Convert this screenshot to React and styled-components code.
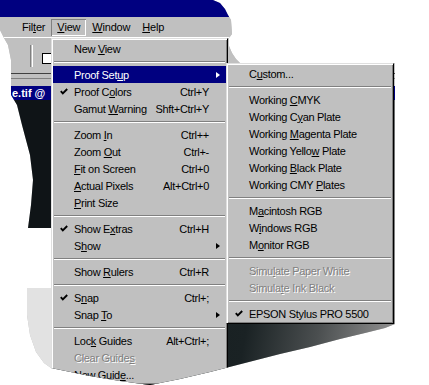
import styled, { createGlobalStyle } from "styled-components";

const GlobalStyle = createGlobalStyle`
  html, body { margin: 0; padding: 0; background: #fff; }
  body { font-family: "Liberation Sans", Arial, sans-serif; font-size: 11px; }
`;

// torn-paper outline of the screenshot
const TEAR = `polygon(
  0px 0px, 213px 0px, 220px 3px, 225px 9px, 228px 15px, 231px 20px, 232px 34px,
  229px 38px, 229px 46px, 232px 53px, 236px 59px, 240px 63px, 395px 63px,
  395px 324px, 385px 328px, 365px 333px, 340px 339px, 310px 347px, 280px 354px,
  245px 363px, 210px 372px, 180px 379px, 150px 385px, 120px 381px, 90px 376px,
  51px 368px, 44px 363px, 36px 352px, 30px 335px, 27px 315px, 27px 288px,
  51px 288px, 51px 228px, 28px 228px, 31px 205px, 33px 180px, 30px 155px,
  22px 125px, 17px 105px, 11px 95px, 11px 60px, 8px 45px, 4px 38px, 0px 30px
)`;

const VIEW_MENU = [
  { label: "New &View" },
  { sep: true },
  { label: "Proof Set&up", sub: true, active: true },
  { label: "Proof C&olors", keys: "Ctrl+Y", checked: true },
  { label: "Gamut &Warning", keys: "Shft+Ctrl+Y" },
  { sep: true },
  { label: "Zoom &In", keys: "Ctrl++" },
  { label: "Zoom &Out", keys: "Ctrl+-" },
  { label: "&Fit on Screen", keys: "Ctrl+0" },
  { label: "&Actual Pixels", keys: "Alt+Ctrl+0" },
  { label: "&Print Size" },
  { sep: true },
  { label: "Show E&xtras", keys: "Ctrl+H", checked: true },
  { label: "S&how", sub: true },
  { sep: true },
  { label: "Show &Rulers", keys: "Ctrl+R" },
  { sep: true },
  { label: "S&nap", keys: "Ctrl+;", checked: true },
  { label: "Snap &To", sub: true },
  { sep: true },
  { label: "Loc&k Guides", keys: "Alt+Ctrl+;" },
  { label: "Clear Guide&s", disabled: true },
  { label: "New Guid&e..." },
];

const PROOF_MENU = [
  { label: "C&ustom..." },
  { sep: true },
  { label: "Working &CMYK" },
  { label: "Working C&yan Plate" },
  { label: "Working &Magenta Plate" },
  { label: "Working Yello&w Plate" },
  { label: "Working &Black Plate" },
  { label: "Working CMY &Plates" },
  { sep: true },
  { label: "M&acintosh RGB" },
  { label: "W&indows RGB" },
  { label: "M&onitor RGB" },
  { sep: true },
  { label: "Simu&late Paper White", disabled: true },
  { label: "Simula&te Ink Black", disabled: true },
  { sep: true },
  { label: "EPSON Stylus PRO 5500", checked: true },
];

const Label = ({ text }) => {
  const i = text.indexOf("&");
  if (i < 0) return text;
  return (
    <>
      {text.slice(0, i)}
      <u>{text[i + 1]}</u>
      {text.slice(i + 2)}
    </>
  );
};

const Check = () => (
  <svg width="8" height="7" viewBox="0 0 8 7">
    <polyline points="0.8,3.2 2.8,5.4 7.2,1" fill="none" stroke="currentColor" strokeWidth="1.9" />
  </svg>
);

const Menu = ({ items, ...rest }) => (
  <MenuBox {...rest}>
    {items.map((it, i) =>
      it.sep ? (
        <Separator key={i} />
      ) : (
        <Item key={i} $active={it.active} $disabled={it.disabled}>
          <CheckCell>{it.checked && <Check />}</CheckCell>
          <Text><Label text={it.label} /></Text>
          {it.keys && <Keys>{it.keys}</Keys>}
          <ArrowCell>{it.sub && <Arrow />}</ArrowCell>
        </Item>
      )
    )}
  </MenuBox>
);

const App = () => (
  <>
    <GlobalStyle />
    <Screen>
      <Desktop>
        <TitleStrip />
        <MenuBar>
          <BarItem><Label text="Fil&ter" /></BarItem>
          <BarItem $open><Label text="&View" /></BarItem>
          <BarItem><Label text="&Window" /></BarItem>
          <BarItem><Label text="&Help" /></BarItem>
        </MenuBar>
        <Toolbar>
          <ToolSep />
          <CheckBox />
        </Toolbar>
        <DocEdge />
        <DocTitle>e.tif @</DocTitle>
        <DocBody>
          <LeftStrip>
            <DarkPiece />
            <Gap />
            <Canvas />
          </LeftStrip>
          <ImageArea />
        </DocBody>
        <Menu items={VIEW_MENU} $left={51} $top={38} $width={177} />
        <Menu items={PROOF_MENU} $left={226} $top={63} $width={168} />
      </Desktop>
    </Screen>
  </>
);

export default App;

const Screen = styled.div`
  position: relative;
  width: 429px;
  height: 385px;
  overflow: hidden;
  background: #fff;
`;

const Desktop = styled.div`
  position: relative;
  width: 429px;
  height: 385px;
  display: flex;
  flex-direction: column;
  clip-path: ${TEAR};
  background: #c0c0c0;
`;

const TitleStrip = styled.div`
  height: 17px;
  flex: none;
  background: #000080;
`;

const MenuBar = styled.div`
  height: 20px;
  flex: none;
  display: flex;
  align-items: center;
  padding-left: 16px;
  background: #c0c0c0;
  color: #000;
  letter-spacing: -0.2px;
`;

const BarItem = styled.div`
  height: 17px;
  padding: 0 6px;
  display: flex;
  align-items: center;
  box-shadow: ${(p) => (p.$open ? "inset 1px 1px #808080, inset -1px -1px #fff" : "none")};
`;

const Toolbar = styled.div`
  height: 35px;
  flex: none;
  display: flex;
  align-items: center;
  padding-left: 30px;
  border-top: 1px solid #fff;
  background: #c0c0c0;
`;

const ToolSep = styled.div`
  width: 1px;
  height: 22px;
  border-left: 1px solid #808080;
  border-right: 1px solid #fff;
  margin-right: 9px;
`;

const CheckBox = styled.div`
  width: 9px;
  height: 9px;
  margin-top: 5px;
  background: #fff;
  border: 1px solid #000;
`;

const DocEdge = styled.div`
  height: 13px;
  flex: none;
  background: linear-gradient(#404040 0 1px, #c0c0c0 1px 5px, #808080 5px 6px, #c0c0c0 6px);
`;

const DocTitle = styled.div`
  height: 14px;
  flex: none;
  padding-left: 12px;
  background: #000080;
  color: #fff;
  font-weight: bold;
  font-size: 11px;
  line-height: 14px;
  white-space: nowrap;
`;

const DocBody = styled.div`
  flex: 1;
  display: flex;
`;

const LeftStrip = styled.div`
  width: 51px;
  display: flex;
  flex-direction: column;
`;

const DarkPiece = styled.div`
  height: 128px;
  background: #0f1417;
`;

const Gap = styled.div`
  height: 60px;
  background: #fff;
`;

const Canvas = styled.div`
  flex: 1;
  background: #e2e2e2;
`;

const ImageArea = styled.div`
  flex: 1;
  background: linear-gradient(100deg, #101719 0%, #1a2224 55%, #4b4f50 72%, #8a8a8a 88%);
`;

const MenuBox = styled.div`
  position: absolute;
  left: ${(p) => p.$left}px;
  top: ${(p) => p.$top}px;
  width: ${(p) => p.$width}px;
  box-sizing: border-box;
  padding: 1px;
  background: #c0c0c0;
  border: 1px solid;
  border-color: #dfdfdf #000 #000 #dfdfdf;
  box-shadow: inset 1px 1px #fff, inset -1px -1px #808080;
  color: #000;
  letter-spacing: -0.3px;
`;

const Item = styled.div`
  height: 17px;
  display: flex;
  align-items: center;
  white-space: nowrap;
  background: ${(p) => (p.$active ? "#000080" : "transparent")};
  color: ${(p) => (p.$active ? "#fff" : p.$disabled ? "#808080" : "#000")};
  text-shadow: ${(p) => (p.$disabled ? "1px 1px 0 #fff" : "none")};
`;

const CheckCell = styled.div`
  width: 21px;
  flex: none;
  display: flex;
  justify-content: center;
  align-items: center;
`;

const Text = styled.span`
  flex: 1;
`;

const Keys = styled.span`
  flex: none;
  text-align: right;
`;

const ArrowCell = styled.div`
  width: 17px;
  flex: none;
  display: flex;
  justify-content: center;
  align-items: center;
`;

const Arrow = styled.span`
  width: 0;
  height: 0;
  border-top: 3.5px solid transparent;
  border-bottom: 3.5px solid transparent;
  border-left: 4px solid currentColor;
`;

const Separator = styled.div`
  height: 9px;
  display: flex;
  flex-direction: column;
  justify-content: center;
  padding: 0 1px;

  &::before {
    content: "";
    display: block;
    height: 1px;
    background: #808080;
    border-bottom: 1px solid #fff;
  }
`;
